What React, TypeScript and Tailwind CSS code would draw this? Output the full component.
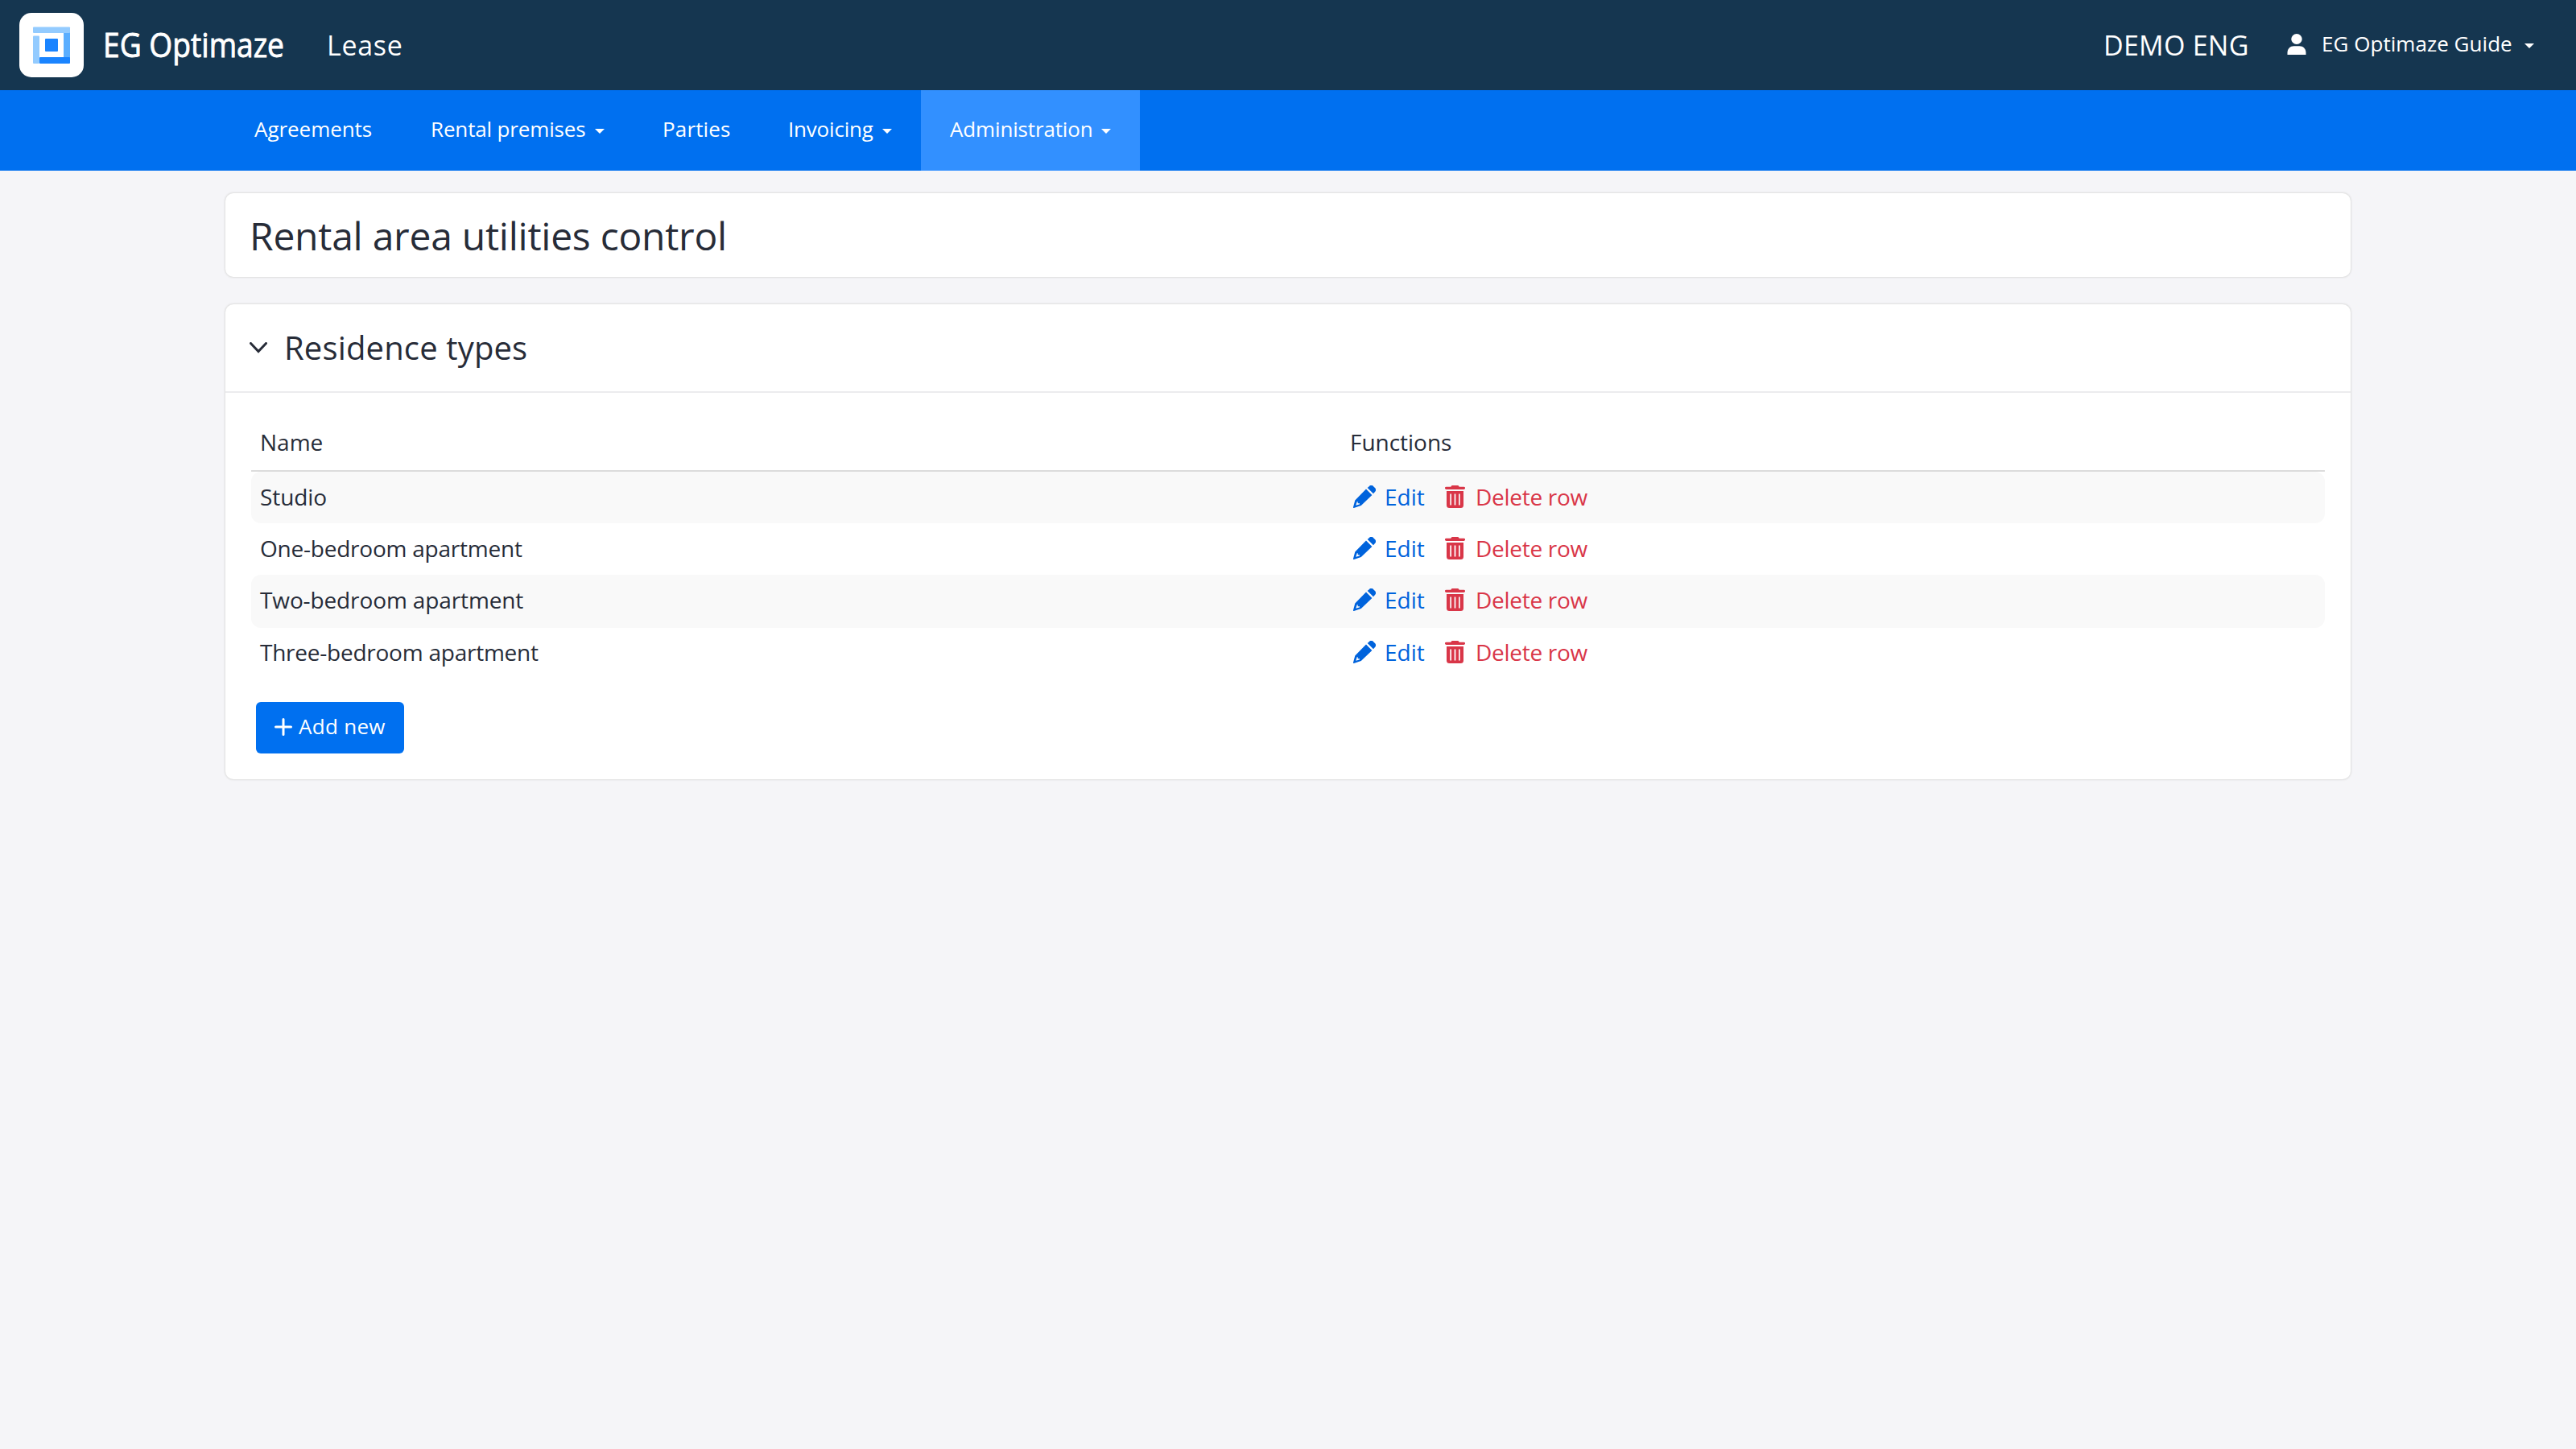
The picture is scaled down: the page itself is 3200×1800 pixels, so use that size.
import { useState } from 'react';
import { clsx } from 'clsx';

interface NavItem {
  label: string;
  width: string;
  tracking: string;
  dropdown?: boolean;
  active?: boolean;
}

interface ResidenceType {
  id: number;
  name: string;
  tracking: string;
  height: string;
}

const navItems: NavItem[] = [
  { label: 'Agreements', width: 'w-[219px]', tracking: 'tracking-[-0.05px]' },
  { label: 'Rental premises', width: 'w-[288px]', tracking: 'tracking-[-0.15px]', dropdown: true },
  { label: 'Parties', width: 'w-[156px]', tracking: 'tracking-[0.15px]' },
  { label: 'Invoicing', width: 'w-[201px]', tracking: 'tracking-[-0.2px]', dropdown: true },
  { label: 'Administration', width: 'w-[272px]', tracking: 'tracking-[-0.15px]', dropdown: true, active: true },
];

const residenceTypes: ResidenceType[] = [
  { id: 1, name: 'Studio', tracking: 'tracking-[-0.1px]', height: 'h-16 pb-[3px]' },
  { id: 2, name: 'One-bedroom apartment', tracking: 'tracking-[-0.23px]', height: 'h-16 pb-[2px]' },
  { id: 3, name: 'Two-bedroom apartment', tracking: 'tracking-[-0.12px]', height: 'h-[66px] pb-1' },
  { id: 4, name: 'Three-bedroom apartment', tracking: 'tracking-[-0.24px]', height: 'h-[60px] pb-px' },
];

function Logo() {
  return (
    <svg width="80" height="80" viewBox="0 0 80 80">
      <rect width="80" height="80" rx="15" fill="#fff" />
      <rect x="17" y="28.5" width="8" height="34.5" rx="1" fill="#93cbff" />
      <rect x="55" y="18" width="8" height="44" rx="1" fill="#5aaeff" />
      <rect x="17" y="17.5" width="46" height="7.5" rx="1" fill="#93cbff" />
      <rect x="25" y="55" width="38" height="8" rx="1" fill="#1a84ff" />
      <rect x="32" y="32" width="16" height="16" rx="1" fill="#1a84ff" />
    </svg>
  );
}

function Caret({ className }: { className?: string }) {
  return (
    <svg width="12" height="6" viewBox="0 0 12 6" className={clsx('shrink-0', className)}>
      <path d="M0 0h12L6 6z" fill="currentColor" />
    </svg>
  );
}

function UserIcon() {
  return (
    <svg width="24" height="26" viewBox="0 0 24 26" className="mt-[2px]">
      <ellipse cx="12" cy="6.5" rx="6.7" ry="6.5" fill="currentColor" />
      <path d="M0.5 26v-2.500C0.500 18.500 4 15.300 8.500 15.300h7c4.500 0 8 3.200 8 8.200V26z" fill="currentColor" />
    </svg>
  );
}

function PencilIcon() {
  return (
    <svg width="28" height="28" viewBox="0 0 28 28">
      <path
        fillRule="evenodd"
        d="M16 4.600 23.400 12 9.800 25 0.900 28a0.700 0.700 0 0 1-0.900-0.900L2.300 18.400ZM4.700 20.200 3.300 24.700 7.800 23.400 8 22.300H5.700V20.200Z"
        fill="currentColor"
      />
      <path d="M17.700 3 20 0.900a3.600 3.600 0 0 1 4.900 0L27 3.100a3.600 3.600 0 0 1 0 4.900L25 10.300Z" fill="currentColor" />
    </svg>
  );
}

function TrashIcon() {
  return (
    <svg width="25" height="28" viewBox="0 0 25 28">
      <path d="M1.600 1.700H7.200L8.600 0h7.800l1.400 1.700h5.600a1.600 1.600 0 0 1 0 3.300H1.600a1.600 1.600 0 0 1 0-3.300Z" fill="currentColor" />
      <path
        fillRule="evenodd"
        d="M2 7h21v17.500a3.500 3.500 0 0 1-3.500 3.500h-14A3.500 3.500 0 0 1 2 24.500ZM6.300 10.500v14h1.700v-14ZM11.600 10.500v14h1.800v-14ZM17 10.500v14h1.700v-14Z"
        fill="currentColor"
      />
    </svg>
  );
}

export default function App() {
  const [open, setOpen] = useState(true);

  return (
    <div className="min-h-[1800px] w-[3200px] bg-[#f5f5f8] font-['Open_Sans',sans-serif] text-[28px] text-[#272c38]">
      {/* Header */}
      <header className="flex h-28 items-center bg-[#153650] pr-[52px] pb-1 pl-6 text-white">
        <div className="mt-1">
          <Logo />
        </div>
        <svg width="236" height="72" viewBox="0 0 236 72" className="mt-1 ml-5 overflow-visible">
          <text
            x="4"
            y="51"
            textLength="225"
            lengthAdjust="spacingAndGlyphs"
            className="fill-white stroke-white stroke-[0.9px] font-['Open_Sans',sans-serif] text-[42px]"
          >
            EG Optimaze
          </text>
        </svg>
        <span className="mt-1 ml-[46px] text-[34px] tracking-[0.7px]">Lease</span>
        <span className="mt-1 ml-auto w-[228px] text-[34px] whitespace-nowrap tracking-[0.25px]">DEMO ENG</span>
        <UserIcon />
        <button className="ml-[19px] flex w-[264px] items-center justify-between text-[26px] whitespace-nowrap tracking-[0.04px]">
          EG Optimaze Guide
          <Caret className="mt-[6px]" />
        </button>
      </header>

      {/* Navigation */}
      <nav className="flex h-[100px] bg-[#0070f0] pl-[280px] text-[26px] text-white">
        {navItems.map((item) => (
          <a
            key={item.label}
            href="#"
            className={clsx(
              'flex items-center justify-between px-9 pb-1 whitespace-nowrap',
              item.width,
              item.tracking,
              item.active && 'bg-[#3290ff]'
            )}
          >
            {item.label}
            {item.dropdown && <Caret className="mt-[6px]" />}
          </a>
        ))}
      </nav>

      <main className="mx-auto w-[2640px] pt-7">
        <div className="flex h-[104px] items-center rounded-[10px] bg-white px-[30px] shadow-[0_0_2px_1px_#dedede]">
          <h1 className="pt-px text-[48px] tracking-[-0.25px]">Rental area utilities control</h1>
        </div>

        <section className="mt-[34px] rounded-[10px] bg-white shadow-[0_0_2px_1px_#dedede]">
          <button
            onClick={() => setOpen(!open)}
            className="flex h-[110px] w-full items-center border-b-2 border-[#ececee] pr-8 pb-px pl-[30px] text-left"
          >
            <svg width="22" height="14" viewBox="0 0 22 14" className="mt-px">
              <path d="M1.500 1.500 11 11.500l9.500-10" fill="none" stroke="currentColor" strokeWidth="3" strokeLinecap="round" />
            </svg>
            <h2 className="ml-[21px] text-[40px] tracking-[0.15px]">Residence types</h2>
          </button>

          {open && (
            <div className="px-8 pt-8 pb-8">
              <div className="flex h-[66px] items-center border-b-2 border-[#dcdcdc] pb-[6px] font-medium">
                <span className="w-[1365px] pl-[11px]">Name</span>
                <span className="tracking-[-0.03px]">Functions</span>
              </div>
              {residenceTypes.map((type) => (
                <div
                  key={type.id}
                  className={clsx('flex items-center rounded-xl odd:bg-white even:bg-[#f9f9f9]', type.height)}
                >
                  <span className={clsx('w-[1369px] pl-[11px]', type.tracking)}>{type.name}</span>
                  <a href="#" className="flex w-[114px] items-center gap-[11px] text-[#0063dc]">
                    <PencilIcon />
                    Edit
                  </a>
                  <a href="#" className="flex items-center gap-[13px] tracking-[-0.28px] text-[#d93648]">
                    <TrashIcon />
                    Delete row
                  </a>
                </div>
              ))}
              <button className="mt-8 ml-[6px] flex h-16 w-[184px] items-center rounded-md bg-[#0070f0] pb-[3px] pl-[23px] text-[26px] tracking-[0.3px] whitespace-nowrap text-white">
                <svg width="22" height="22" viewBox="0 0 22 22" className="mr-[8px]">
                  <path d="M11 1.500v19M1.500 11h19" fill="none" stroke="currentColor" strokeWidth="3" strokeLinecap="round" />
                </svg>
                Add new
              </button>
            </div>
          )}
        </section>
      </main>
    </div>
  );
}
